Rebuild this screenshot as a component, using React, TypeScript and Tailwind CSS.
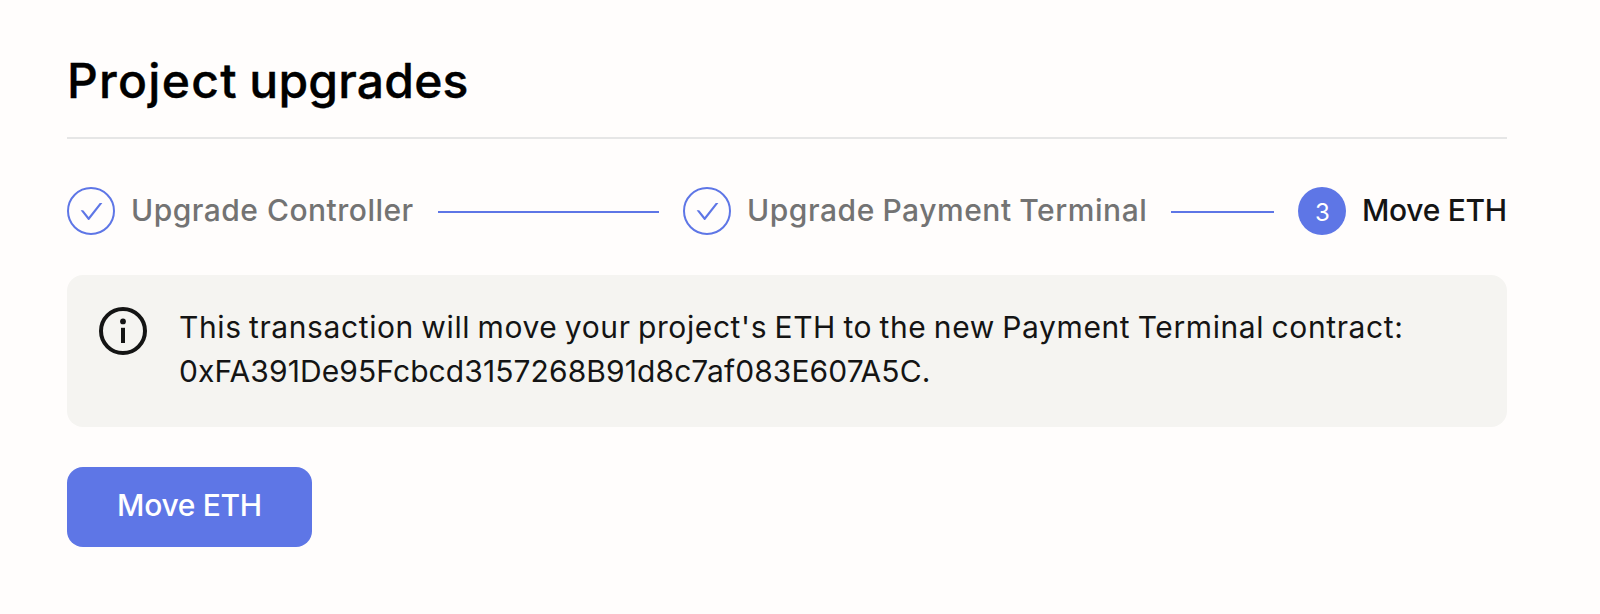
import React from "react";

function CheckCircle() {
  return (
    <span className="flex size-12 shrink-0 items-center justify-center rounded-full border-2 border-[#5e76e6]">
      <svg width="27" height="27" viewBox="0 0 1024 1024" fill="#5e76e6">
        <path d="M912 190h-69.900c-9.800 0-19.100 4.500-25.100 12.200L404.700 724.500 207 474a32 32 0 0 0-25.100-12.200H112c-6.700 0-10.400 7.700-6.300 12.900l273.900 347c12.800 16.200 37.400 16.200 50.300 0l488.400-618.900c4.100-5.100.4-12.800-6.300-12.800z" />
      </svg>
    </span>
  );
}

function Connector({ className }: { className: string }) {
  return <span className={`mx-6 mt-6 h-0.5 self-start bg-[#5e76e6] ${className}`} />;
}

function InfoIcon() {
  return (
    <svg className="size-12 shrink-0" viewBox="0 0 48 48" fill="none">
      <circle cx="24" cy="24" r="22" stroke="#141414" strokeWidth="4" />
      <circle cx="24" cy="14.400" r="2.900" fill="#141414" />
      <path d="M24 20.800v15.200" stroke="#141414" strokeWidth="4" />
    </svg>
  );
}

export default function App() {
  return (
    <main className="h-[614px] w-[1600px] bg-[#fffdfc] pt-[51px] pr-[93px] pl-[67px] font-['Inter',sans-serif] text-[30px] text-[#141414]">
      <h1 className="h-[86px] text-[48px] leading-[60px] font-medium tracking-[0.2px] whitespace-nowrap text-black [-webkit-text-stroke:0.4px_black] [word-spacing:-1.5px]">
        <span className="tracking-[1.3px]">Project</span> upgrades
      </h1>
      <div className="h-0.5 bg-[#e6e6e6]" />

      <div className="mt-12 flex h-12 items-center leading-[44px] font-medium whitespace-nowrap text-[#737373]">
        <CheckCircle />
        <span className="ml-4 w-[283px] pb-[3px] tracking-[0.49px]">Upgrade Controller</span>
        <Connector className="w-[221px]" />
        <CheckCircle />
        <span className="ml-4 w-[400px] pb-[3px] tracking-[0.55px] [word-spacing:-1px]">Upgrade Payment Terminal</span>
        <Connector className="flex-1" />
        <span className="flex size-12 shrink-0 items-center justify-center rounded-full bg-[#5e76e6] pt-1 pl-px text-2xl font-normal text-white">
          3
        </span>
        <span className="ml-4 w-[145px] pb-[3px] tracking-[-0.3px] text-[#141414]">Move ETH</span>
      </div>

      <div className="mt-10 flex h-[152px] gap-8 rounded-2xl bg-[#f5f4f1] px-8 pt-8">
        <InfoIcon />
        <p className="-mt-0.5 leading-[44px] whitespace-nowrap">
          <span className="tracking-[0.6px] [word-spacing:-1.6px]">
            This transaction will move your project's ETH to the new Payment Terminal contract:
          </span>
          <br />
          <span className="tracking-[0.09px]">0xFA391De95Fcbcd3157268B91d8c7af083E607A5C.</span>
        </p>
      </div>

      <button className="mt-10 flex h-20 w-[245px] items-center justify-center rounded-2xl bg-[#5e76e6] pb-[3px] font-medium tracking-[-0.3px] whitespace-nowrap text-white">
        Move ETH
      </button>
    </main>
  );
}
